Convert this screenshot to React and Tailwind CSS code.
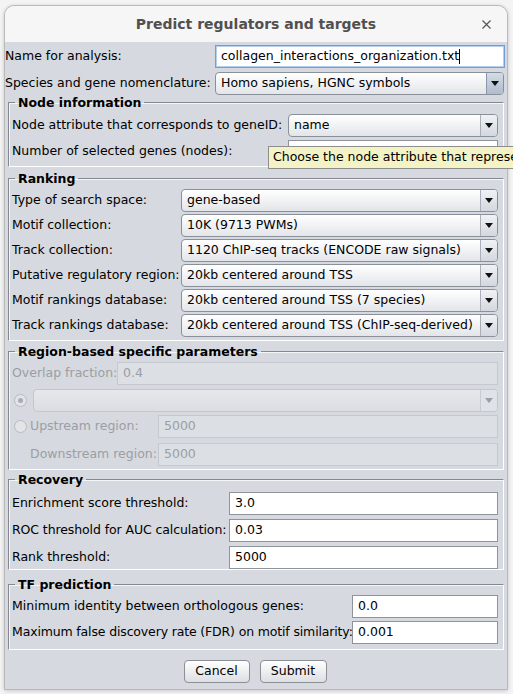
import React from "react";

const FONT = { fontFamily: '"DejaVu Sans", "Liberation Sans", sans-serif' };

function Arrow({ disabled }) {
  return (
    <svg width="8" height="5" viewBox="0 0 8 5">
      <path d="M0 0 L8 0 L4 5 Z" fill={disabled ? "#9a9ea5" : "#111"} />
    </svg>
  );
}

function Combo({ text, focus, disabled }) {
  return (
    <div
      className={`h-[23px] flex items-stretch rounded-[4px] border overflow-hidden ${
        disabled
          ? "border-[#c3c7cd] bg-linear-to-b from-[#e6e8ec] to-[#dadde2]"
          : "border-[#8a9099] bg-linear-to-b from-white to-[#e3e5e9]"
      }`}
    >
      <div className="flex-1 flex items-center pl-[5px] whitespace-nowrap overflow-hidden text-black">
        {text}
      </div>
      <div
        className={`w-[17px] border-l flex items-center justify-center ${
          disabled
            ? "border-[#c8ccd2] bg-[#dfe2e6]"
            : focus
            ? "border-[#8a97a8] bg-linear-to-b from-[#d3dce7] to-[#aebccd]"
            : "border-[#aab0b8] bg-linear-to-b from-[#f0f2f5] to-[#d3d8df]"
        }`}
      >
        <Arrow disabled={disabled} />
      </div>
    </div>
  );
}

function Field({ value, disabled, focus }) {
  return (
    <div
      className={`h-[23px] flex items-center pl-[5px] border whitespace-nowrap overflow-hidden ${
        disabled
          ? "border-[#c5c9cf] bg-[#dcdfe4] text-[#9b9ea4]"
          : focus
          ? "border-[#6f9fd8] bg-white text-black shadow-[inset_0_0_0_1px_#b5d0ef]"
          : "border-[#8f949b] bg-white text-black"
      }`}
    >
      {value}
      {focus && <span className="inline-block w-px h-[15px] bg-black" />}
    </div>
  );
}

function Section({ title, children, className = "" }) {
  return (
    <fieldset
      className={`border border-t-[#85888e] border-l-[#85888e] border-b-white border-r-white shadow-[inset_1px_1px_0_#f4f5f7] mx-[3px] pl-[3px] pr-[5px] ${className}`}
    >
      <legend className="ml-[3px] px-[3px] font-bold text-black leading-[15px]">
        {title}
      </legend>
      {children}
    </fieldset>
  );
}

function Radio({ checked }) {
  return (
    <div className="w-[13px] h-[13px] shrink-0 rounded-full border border-[#b8bcc2] bg-[#e2e4e8] flex items-center justify-center">
      {checked && <div className="w-[5px] h-[5px] rounded-full bg-[#a9adb3]" />}
    </div>
  );
}

function Button({ children, w }) {
  return (
    <div
      className={`${w} h-[23px] rounded-[4px] border border-[#8b8f96] bg-linear-to-b from-white to-[#dcdee2] flex items-center justify-center text-black`}
    >
      {children}
    </div>
  );
}

export default function App() {
  return (
    <div
      className="relative w-[513px] h-[694px] overflow-hidden bg-[#f4f4f4] pt-[5px] pl-[4px] text-[12.5px]"
      style={FONT}
    >
      <div className="w-[504px] h-[685px] rounded-t-[10px] border border-[#b9b9b9] bg-[#d6d9df] shadow-[0_1px_4px_rgba(0,0,0,0.18)] flex flex-col overflow-hidden">
        {/* Title bar */}
        <div className="h-[36px] shrink-0 bg-[#f6f6f6] flex items-center justify-center relative">
          <span className="font-bold text-[14px] text-[#505050] pt-[1px]">
            Predict regulators and targets
          </span>
          <svg
            className="absolute right-[16px] top-[14px]"
            width="9"
            height="9"
            viewBox="0 0 9 9"
          >
            <path d="M0.5 0.5 L8.5 8.5 M8.5 0.5 L0.5 8.5" stroke="#555" strokeWidth="1.2" />
          </svg>
        </div>

        {/* Content */}
        <div className="flex-1 flex flex-col pt-[3px]">
          <div className="grid grid-cols-[210px_1fr] gap-y-[4px] items-center pr-[2px]">
            <span className="whitespace-nowrap">Name for analysis:</span>
            <Field value="collagen_interactions_organization.txt" focus />
            <span className="whitespace-nowrap">Species and gene nomenclature:</span>
            <div className="pr-[1px]">
              <Combo text="Homo sapiens, HGNC symbols" focus />
            </div>
          </div>

          <Section title="Node information" className="pb-[3px]">
            <div className="grid grid-cols-[276px_1fr] gap-y-[3px] items-center mt-[4px]">
              <span className="whitespace-nowrap">Node attribute that corresponds to geneID:</span>
              <Combo text="name" />
              <span className="whitespace-nowrap">Number of selected genes (nodes):</span>
              <Field value="" />
            </div>
          </Section>

          <Section title="Ranking" className="mt-[4px] pb-[3px]">
            <div className="grid grid-cols-[169px_1fr] gap-y-[2px] items-center mt-[3px]">
              <span className="whitespace-nowrap">Type of search space:</span>
              <Combo text="gene-based" />
              <span className="whitespace-nowrap">Motif collection:</span>
              <Combo text="10K (9713 PWMs)" />
              <span className="whitespace-nowrap">Track collection:</span>
              <Combo text="1120 ChIP-seq tracks (ENCODE raw signals)" />
              <span className="whitespace-nowrap">Putative regulatory region:</span>
              <Combo text="20kb centered around TSS" />
              <span className="whitespace-nowrap">Motif rankings database:</span>
              <Combo text="20kb centered around TSS (7 species)" />
              <span className="whitespace-nowrap">Track rankings database:</span>
              <Combo text="20kb centered around TSS (ChIP-seq-derived)" />
            </div>
          </Section>

          <Section title="Region-based specific parameters" className="mt-[3px] pb-[3px]">
            <div className="flex flex-col mt-[3px] text-[#9b9ea4]">
              <div className="flex items-center">
                <span className="w-[105px] whitespace-nowrap">Overlap fraction:</span>
                <div className="flex-1">
                  <Field value="0.4" disabled />
                </div>
              </div>
              <div className="flex items-center mt-[4px]">
                <div className="w-[21px] pl-[2px]">
                  <Radio checked />
                </div>
                <div className="flex-1">
                  <Combo text="" disabled />
                </div>
              </div>
              <div className="flex items-center mt-[3px]">
                <div className="w-[18px] pl-[2px]">
                  <Radio />
                </div>
                <span className="w-[128px] whitespace-nowrap">Upstream region:</span>
                <div className="flex-1">
                  <Field value="5000" disabled />
                </div>
              </div>
              <div className="flex items-center mt-[5px]">
                <div className="w-[18px]" />
                <span className="w-[128px] whitespace-nowrap">Downstream region:</span>
                <div className="flex-1">
                  <Field value="5000" disabled />
                </div>
              </div>
            </div>
          </Section>

          <Section title="Recovery" className="mt-[2px] pb-0">
            <div className="grid grid-cols-[217px_1fr] gap-y-[4px] items-center mt-[5px]">
              <span className="whitespace-nowrap">Enrichment score threshold:</span>
              <Field value="3.0" />
              <span className="whitespace-nowrap tracking-[-0.1px]">ROC threshold for AUC calculation:</span>
              <Field value="0.03" />
              <span className="whitespace-nowrap">Rank threshold:</span>
              <Field value="5000" />
            </div>
          </Section>

          <Section title="TF prediction" className="mt-[7px] pb-[5px]">
            <div className="grid grid-cols-[340px_1fr] gap-y-[3px] items-center mt-[3px]">
              <span className="whitespace-nowrap">Minimum identity between orthologous genes:</span>
              <Field value="0.0" />
              <span className="whitespace-nowrap tracking-[-0.15px]">Maximum false discovery rate (FDR) on motif similarity:</span>
              <Field value="0.001" />
            </div>
          </Section>

          <div className="flex justify-center gap-[10px] mt-[10px] pr-[2px]">
            <Button w="w-[66px]">Cancel</Button>
            <Button w="w-[67px]">Submit</Button>
          </div>
        </div>
      </div>

      {/* Tooltip */}
      <div className="absolute left-[268px] top-[146px] w-[260px] h-[23px] border border-[#8e8e8e] bg-[#f3f3c6] flex items-center pl-[4px] whitespace-nowrap overflow-hidden text-black">
        Choose the node attribute that represents the gene ID
      </div>
    </div>
  );
}
